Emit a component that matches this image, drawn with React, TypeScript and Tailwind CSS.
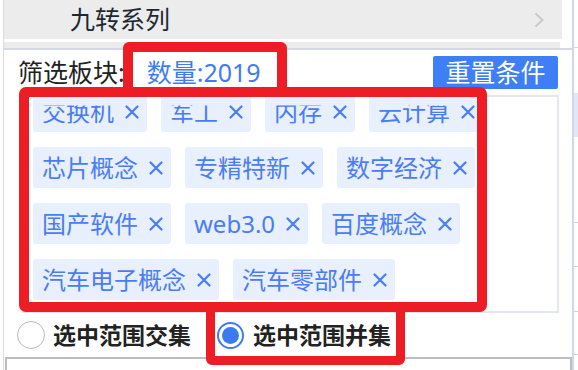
import React from 'react';

const tags: string[][] = [
    ['交换机', '军工', '内存', '云计算'],
    ['芯片概念', '专精特新', '数字经济'],
    ['国产软件', 'web3.0', '百度概念'],
    ['汽车电子概念', '汽车零部件'],
];

const font = { fontFamily: '"Noto Sans", "Noto Sans CJK SC", sans-serif' };

const CloseIcon: React.FC = () => (
    <svg width="14" height="14" viewBox="0 0 14 14" className="ml-[11px] shrink-0">
        <path d="M1.5 1.5 L12.5 12.5 M12.5 1.5 L1.5 12.5" stroke="#4a7cf3" strokeWidth="2.2" strokeLinecap="round" />
    </svg>
);

// a primeira linha fica cortada pelo scroll da lista
const Tag: React.FC<{ label: string; cut?: boolean }> = ({ label, cut }) => (
    <div className="h-[41px] flex items-center pl-[9px] pr-[8px] bg-[#e8f0fe] rounded-[3px] text-[24px] leading-none text-[#4a7cf3]">
        <span className={cut ? '[clip-path:inset(6px_0_0_0)]' : ''}>{label}</span>
        <CloseIcon />
    </div>
);

const App: React.FC = () => {
    return (
        <div className="relative w-[578px] h-[370px] overflow-hidden bg-white flex" style={font}>
            {/* borda esquerda */}
            <div className="w-[3px] shrink-0" />
            <div className="w-px shrink-0 bg-[#d7d9e6]" />

            {/* painel principal */}
            <div className="w-[568px] shrink-0 flex flex-col">
                {/* Header */}
                <div className="h-[39px] mr-[10px] bg-[#ececec] flex items-center justify-between pl-[66px] pr-[18px]">
                    <span className="text-[25px] leading-none text-[#1d2833]">九转系列</span>
                    <svg width="10" height="16" viewBox="0 0 10 16">
                        <path d="M1.5 1.5 L8.5 8 L1.5 14.5" fill="none" stroke="#c9c9c9" strokeWidth="2" />
                    </svg>
                </div>
                <div className="h-[3px]" />
                <div className="h-[6px] mr-[12px] bg-[#ececec]" />
                <div className="h-[2px] bg-[#d5d8e6]" />

                {/* Filtro */}
                <div className="flex items-center justify-between pl-[14px] pr-[14px] pt-[6px]">
                    <div className="flex items-center text-[25px] leading-none">
                        <span className="text-[#222]">筛选板块:</span>
                        <span className="ml-[22px] text-[#3f7cf3]">数量:2019</span>
                    </div>
                    <button className="h-[33px] w-[125px] bg-[#3e7ef6] rounded-[2px] text-white text-[25px] leading-none flex items-center justify-center">
                        重置条件
                    </button>
                </div>

                {/* Lista de tags */}
                <div className="mt-[6px] ml-[18px] mr-[13px] h-[218px] border-2 border-[#e4e7ed] overflow-hidden pl-[9px]">
                    <div className="mt-[-6px] flex flex-col gap-[15px]">
                        {tags.map((row, i) => (
                            <div key={i} className="flex gap-[14px]">
                                {row.map((t) => (
                                    <Tag key={t} label={t} cut={i === 0} />
                                ))}
                            </div>
                        ))}
                    </div>
                </div>

                {/* Radios */}
                <div className="h-[44px] flex items-center pl-[13px] text-[23px] leading-none font-bold text-[#222]">
                    <div className="w-[28px] h-[28px] rounded-full border-[1.5px] border-[#b9b9b9] bg-white" />
                    <span className="ml-[8px]">选中范围交集</span>
                    <div className="ml-[26px] w-[27px] h-[27px] rounded-full border-2 border-[#3b7bf2] flex items-center justify-center">
                        <div className="w-[17px] h-[17px] rounded-full bg-[#3b7bf2]" />
                    </div>
                    <span className="ml-[9px]">选中范围并集</span>
                </div>

                <div className="flex-1 ml-[1px] border-2 border-b-0 border-[#bdbdbd]" />
            </div>

            {/* painel vizinho */}
            <div className="w-[2px] shrink-0 bg-[#d2d6ec]" />
            <div className="flex-1 flex flex-col">
                <div className="h-[47px] shrink-0" />
                <div className="h-px shrink-0 bg-[#d2d6ec]" />
                <div className="h-[45px] shrink-0" />
                <div className="h-[44px] shrink-0 bg-[#e2e6f6]" />
                <div className="h-[85px] shrink-0" />
                <div className="h-px shrink-0 bg-[#d0d0d8]" />
                <div className="h-[43px] shrink-0" />
                <div className="h-px shrink-0 bg-[#d0d0d8]" />
                <div className="h-[44px] shrink-0" />
                <div className="h-px shrink-0 bg-[#d0d0d8]" />
                <div className="h-[42px] shrink-0" />
                <div className="h-px shrink-0 bg-[#d0d0d8]" />
            </div>

            {/* Marcações vermelhas */}
            <div className="absolute left-[123px] top-[42px] w-[164px] h-[55px] border-[10px] border-[#ee1c25] rounded-[6px]" />
            <div className="absolute left-[19px] top-[87px] w-[468px] h-[225px] border-[10px] border-[#ee1c25] rounded-[7px]" />
            <div className="absolute left-[206px] top-[303px] w-[199px] h-[62px] border-[9px] border-[#ee1c25] rounded-[6px]" />
        </div>
    );
};

export default App;
